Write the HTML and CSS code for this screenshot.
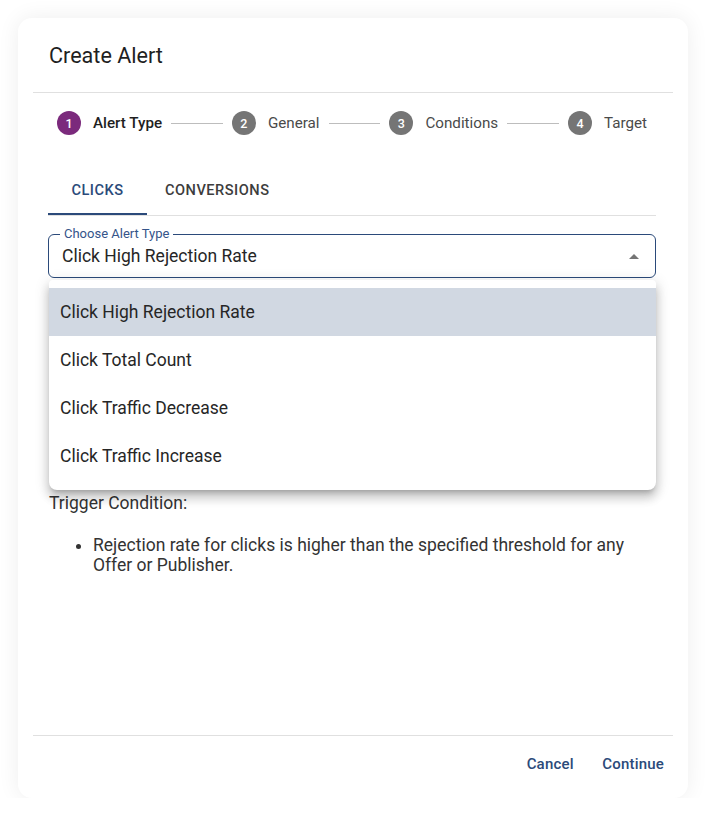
FILE: index.html
```html
<!DOCTYPE html>
<html>
<head>
<meta charset="utf-8">
<link rel="stylesheet" href="styles.css">
</head>
<body>
<div class="card">
  <div class="title">Create Alert</div>
  <div class="divider"></div>
  <div class="content">
    <div class="stepper">
      <div class="step active"><span class="num">1</span><span class="label">Alert Type</span></div>
      <div class="connector"></div>
      <div class="step"><span class="num">2</span><span class="label">General</span></div>
      <div class="connector"></div>
      <div class="step"><span class="num">3</span><span class="label">Conditions</span></div>
      <div class="connector"></div>
      <div class="step"><span class="num">4</span><span class="label">Target</span></div>
    </div>
    <div class="tabs">
      <div class="tab selected">CLICKS</div>
      <div class="tab">CONVERSIONS</div>
    </div>
    <div class="field">
      <span class="field-label">Choose Alert Type</span>
      <span class="field-value">Click High Rejection Rate</span>
      <span class="arrow"></span>
      <ul class="menu">
        <li class="item highlighted">Click High Rejection Rate</li>
        <li class="item">Click Total Count</li>
        <li class="item">Click Traffic Decrease</li>
        <li class="item">Click Traffic Increase</li>
      </ul>
    </div>
    <div class="spacer"></div>
    <p class="trigger">Trigger Condition:</p>
    <ul class="conditions">
      <li>Rejection rate for clicks is higher than the specified threshold for any Offer or Publisher.</li>
    </ul>
  </div>
  <div class="footer">
    <div class="divider"></div>
    <div class="actions">
      <button class="btn">Cancel</button>
      <button class="btn">Continue</button>
    </div>
  </div>
</div>
</body>
</html>
```

FILE: styles.css
```css
* { box-sizing: border-box; }
html, body { margin: 0; padding: 0; background: #ffffff; }
body {
  font-family: Roboto, "Liberation Sans", sans-serif;
  color: #212121;
  padding-top: 18px;
}
.card {
  width: 670px;
  height: 780px;
  margin: 0 auto;
  background: #fff;
  border-radius: 14px;
  box-shadow: 0 0 22px rgba(0,0,0,0.07);
  display: flex;
  flex-direction: column;
}
.title {
  font-size: 21.6px;
  line-height: 32px;
  font-weight: 400;
  color: #1f1f1f;
  padding: 22px 0 20px 31px;
}
.divider {
  height: 1px;
  background: #e0e0e0;
  margin: 0 15px;
}
.content {
  padding: 18px 32px 0 30px;
}
.stepper {
  display: flex;
  align-items: center;
  height: 24px;
  padding: 0 0 0 9px;
}
.step {
  display: flex;
  align-items: center;
  gap: 12px;
  padding: 0 9px 0 0;
}
.connector + .step { padding-left: 9px; }
.num {
  width: 24px;
  height: 24px;
  border-radius: 50%;
  background: #757575;
  color: #fff;
  font-size: 12.5px;
  font-weight: 500;
  display: flex;
  align-items: center;
  justify-content: center;
}
.step.active .num { background: #7b2a7c; }
.label {
  font-size: 15.2px;
  color: #4a4a4a;
}
.step.active .label { color: #1f1f1f; font-weight: 500; }
.connector {
  flex: 1;
  height: 1px;
  background: #bdbdbd;
}
.tabs {
  margin-top: 32px;
  display: flex;
  border-bottom: 1px solid #e0e0e0;
}
.tab {
  height: 48px;
  display: flex;
  align-items: center;
  justify-content: center;
  padding: 0 18px;
  min-width: 99px;
  font-size: 14.6px;
  font-weight: 500;
  letter-spacing: 0.5px;
  color: #3d3d3d;
  position: relative;
  padding-bottom: 2px;
}
.tab.selected { color: #2b4a7a; }
.tab.selected::after {
  content: "";
  position: absolute;
  left: 0; right: 0; bottom: 0;
  height: 2px;
  background: #2b4a7a;
}
.field {
  position: relative;
  margin-top: 18px;
  height: 44px;
  border: 1px solid #2b4a7a;
  border-radius: 6px;
  display: flex;
  align-items: center;
  padding-left: 13px;
}
.field-label {
  position: absolute;
  top: -9px;
  left: 11px;
  padding: 0 4px;
  background: #fff;
  font-size: 13px;
  line-height: 16px;
  color: #35548a;
}
.field-value {
  font-size: 17.5px;
  color: #262626;
}
.arrow {
  position: absolute;
  right: 16px;
  top: 19px;
  width: 0; height: 0;
  border-left: 5px solid transparent;
  border-right: 5px solid transparent;
  border-bottom: 5px solid #757575;
}
.menu {
  position: absolute;
  top: 45px;
  left: 0;
  right: -1px;
  margin: 0;
  padding: 8px 0 10px;
  list-style: none;
  background: #fff;
  border-radius: 4px 4px 8px 8px;
  box-shadow: 0 5px 5px -3px rgba(0,0,0,0.2), 0 8px 10px 1px rgba(0,0,0,0.14), 0 3px 14px 2px rgba(0,0,0,0.12);
  z-index: 5;
}
.item {
  height: 48px;
  display: flex;
  align-items: center;
  padding-left: 11px;
  font-size: 17.5px;
  color: #262626;
}
.item.highlighted { background: #d1d8e2; }
.spacer { height: 215px; }
.trigger {
  margin: 0;
  font-size: 17.5px;
  line-height: 20px;
  color: #333;
  padding-left: 1px;
}
.conditions {
  margin: 22px 0 0;
  padding-left: 45px;
  font-size: 17.5px;
  line-height: 20px;
  color: #333;
}
.footer { margin-top: auto; }
.actions {
  display: flex;
  justify-content: flex-end;
  gap: 12px;
  padding: 10px 16px 16px;
}
.btn {
  height: 36px;
  min-width: 64px;
  padding: 6px 8px;
  border: none;
  background: transparent;
  font-family: Roboto, "Liberation Sans", sans-serif;
  font-size: 15px;
  font-weight: 500;
  color: #2b4a7a;
  letter-spacing: 0.2px;
}
```
